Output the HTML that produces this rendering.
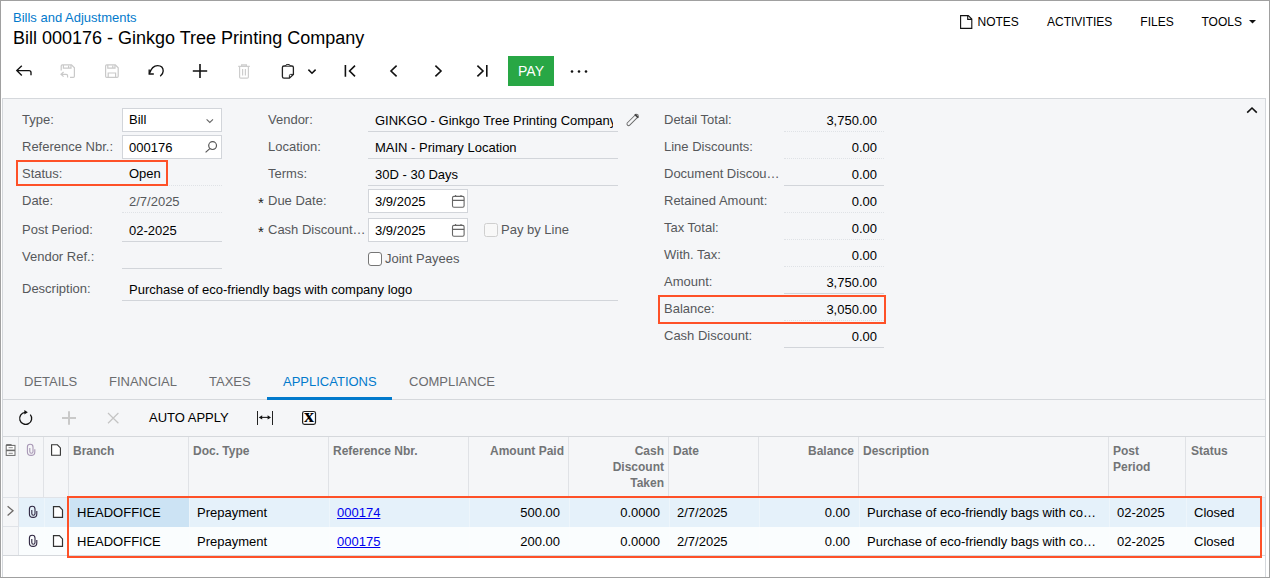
<!DOCTYPE html>
<html lang="en">
<head>
<meta charset="utf-8">
<title>Bill 000176 - Ginkgo Tree Printing Company</title>
<style>
*{box-sizing:border-box;margin:0;padding:0}
html,body{width:1270px;height:578px;overflow:hidden;background:#fff}
body{font-family:"Liberation Sans",Arial,sans-serif;font-size:13px;color:#000;position:relative}
.a{position:absolute;white-space:nowrap}
#frame{position:absolute;left:0;top:0;width:1270px;height:578px;border:1px solid #a0a0a0;pointer-events:none;z-index:50}
.lbl{color:#56585b}
.val{color:#000}
.dis{color:#56585b}
.ul{position:absolute;height:1px;background:#d2d5da}
.uld{position:absolute;height:0;border-top:1px dotted #dfe2e6}
.box{position:absolute;background:#fff;border:1px solid #d2d5da}
.hl{position:absolute;border:2px solid #fe5128;z-index:20}
.tab{position:absolute;top:374px;font-size:13px;color:#6b6c6f;white-space:nowrap;line-height:16px}
.r{text-align:right}
svg{position:absolute;overflow:visible}
.hd{position:absolute;font-weight:bold;color:#727476;font-size:12px;line-height:16px;top:443px;white-space:nowrap}
.vl{position:absolute;width:1px;background:#e0e2e6}
.c{position:absolute;white-space:nowrap;line-height:16px}
</style>
</head>
<body>
<div id="frame"></div>

<!-- header -->
<div class="a" style="left:13px;top:10px;color:#027acc;line-height:15px">Bills and Adjustments</div>
<div class="a" style="left:13px;top:27px;font-size:18px;line-height:22px">Bill 000176 - Ginkgo Tree Printing Company</div>

<div class="a" style="left:977.5px;top:15px;font-size:12px;line-height:15px">NOTES</div>
<div class="a" style="left:1047px;top:15px;font-size:12px;line-height:15px">ACTIVITIES</div>
<div class="a" style="left:1140.3px;top:15px;font-size:12px;line-height:15px">FILES</div>
<div class="a" style="left:1201.5px;top:15px;font-size:12px;line-height:15px">TOOLS</div>

<!-- toolbar -->
<div class="a" style="left:508px;top:56px;width:46px;height:30px;background:#28a745;color:#fff;font-size:14px;line-height:30px;text-align:center">PAY</div>


<!-- toolbar icons (page coordinates) -->
<svg id="ico" width="1270" height="578" viewBox="0 0 1270 578" style="left:0;top:0;z-index:10" fill="none" stroke="#111" stroke-width="1.35" stroke-linecap="butt" stroke-linejoin="miter">
<!-- back -->
<path d="M21.8 65.8 L16.8 70.6 L21.8 75.4 M16.8 70.6 H29 Q31 70.6 31 72.6 V75.2"/>
<!-- save & close (disabled) -->
<g stroke="#c9c9c9" stroke-width="1.2">
<path d="M61.2 70.5 V66 Q61.2 64.9 62.3 64.9 H71.5 L74.4 67.8 V76.2 Q74.4 77.3 73.3 77.3 H70"/>
<path d="M63.4 64.9 V68.2 H71 V64.9 M68.6 65.6 V67.4"/>
<path d="M63.6 72 L61 74.3 L63.6 76.6 M61 74.3 H66.2 Q67.6 74.3 67.6 75.7 V77.6"/>
</g>
<!-- save (disabled) -->
<g stroke="#c9c9c9" stroke-width="1.2">
<path d="M105.6 66 Q105.6 64.9 106.7 64.9 H115.3 L118.2 67.8 V76.2 Q118.2 77.3 117.1 77.3 H106.7 Q105.6 77.3 105.6 76.2 Z"/>
<path d="M107.8 64.9 V68.2 H115 V64.9 M112.8 65.6 V67.4 M108.2 77.3 V73 H115.6 V77.3"/>
</g>
<!-- undo -->
<path d="M149.4 73.6 Q152 65.6 157.6 65.6 Q163.2 65.6 163.2 71 Q163.2 74 160.2 76.2"/>
<path d="M149.2 69.4 V74 H153.8"/>
<!-- plus -->
<path d="M200 64 V78 M192.8 71 H207.2" stroke-width="1.6"/>
<!-- trash (disabled) -->
<g stroke="#cdcdcd" stroke-width="1.2">
<path d="M238.2 66.4 H249.8 M241.6 66.4 V64.8 H246.4 V66.4 M239.6 66.4 V77 Q239.6 78.2 240.8 78.2 H247.2 Q248.4 78.2 248.4 77 V66.4 M242.6 69 V75.6 M245.4 69 V75.6"/>
</g>
<!-- clipboard -->
<g stroke="#222" stroke-width="1.3">
<path d="M285.6 66 H284 Q282.4 66 282.4 67.6 V76.6 Q282.4 78.2 284 78.2 H289.4 L293.4 74.4 V67.6 Q293.4 66 291.8 66 H290.2"/>
<path d="M285.4 66.2 Q285.4 64.4 287.9 64.4 Q290.4 64.4 290.4 66.2 Z" stroke-width="1"/>
<path d="M289.4 78 V75.6 Q289.4 74.4 290.6 74.4 H293.2" stroke-width="1"/>
</g>
<!-- chevron -->
<path d="M308.4 69.6 L312 73.2 L315.6 69.6" stroke-width="1.5"/>
<!-- first -->
<path d="M345.4 65 V76.8 M355 65.6 L349.6 71 L355 76.4" stroke-width="1.6"/>
<!-- prev -->
<path d="M396.6 65.6 L391 71 L396.6 76.4" stroke-width="1.6"/>
<!-- next -->
<path d="M435.4 65.6 L441 71 L435.4 76.4" stroke-width="1.6"/>
<!-- last -->
<path d="M477.4 65.6 L483 71 L477.4 76.4 M486.8 65 V76.8" stroke-width="1.6"/>
<!-- dots -->
<g fill="#111" stroke="none"><circle cx="572" cy="71.5" r="1.3"/><circle cx="579" cy="71.5" r="1.3"/><circle cx="586" cy="71.5" r="1.3"/></g>
<!-- notes icon -->
<path d="M960.6 15.6 H968.3 L971.8 19.1 V28.4 H960.6 Z M967.7 16 V19.4 H971.4" stroke="#111" stroke-width="1.1"/>
<!-- tools caret -->
<path d="M1249 20 H1256 L1252.5 23.6 Z" fill="#111" stroke="none"/>

<!-- type chevron -->
<path d="M206.6 119.4 L209.8 122.4 L213 119.4" stroke="#666" stroke-width="1.1"/>
<!-- search -->
<g stroke="#555" stroke-width="1.2"><circle cx="212.6" cy="145.6" r="3.9"/><path d="M209.8 148.6 L205.6 152.4"/></g>
<!-- pencil -->
<path d="M628.6 123.9 L636.6 115.9" stroke="#666" stroke-width="4.2" stroke-linecap="round"/>
<path d="M628.6 123.9 L636.6 115.9" stroke="#f5f6f8" stroke-width="2.4" stroke-linecap="round"/>
<path d="M635.4 114.8 L637.8 117.2" stroke="#444" stroke-width="1.8" stroke-linecap="round"/>
<!-- calendars -->
<g stroke="#666" stroke-width="1.1">
<rect x="452.5" y="196.4" width="11.6" height="10.8" rx="1.4"/><path d="M452.5 200.4 H464.1 M455.6 195 V196.6 M461 195 V196.6"/>
<rect x="452.5" y="225.4" width="11.6" height="10.8" rx="1.4"/><path d="M452.5 229.4 H464.1 M455.6 224 V225.6 M461 224 V225.6"/>
</g>
<!-- checkboxes -->
<rect x="484.5" y="223.5" width="13" height="13" rx="2" fill="#f8f8f8" stroke="#cfcfcf" stroke-width="1"/>
<rect x="368.5" y="252.5" width="13" height="13" rx="2.5" fill="#fff" stroke="#767676" stroke-width="1"/>
<!-- grid toolbar: refresh -->
<path d="M30.3 414.6 A6 6 0 1 1 25 412.45" stroke="#111" stroke-width="1.3"/>
<path d="M24.4 410 L27.8 412.3 L24.4 414.6 Z" fill="#111" stroke="none"/>
<!-- plus / x disabled -->
<path d="M69 411.2 V424.8 M62 418 H76" stroke="#c9c9c9" stroke-width="2"/>
<path d="M108 413 L118.4 423.2 M118.4 413 L108 423.2" stroke="#c4c4c4" stroke-width="1.2"/>
<!-- fit columns -->
<g stroke="#222" stroke-width="1"><path d="M257.5 411 V425 M272.5 411 V425"/><path d="M261 417.4 H269" stroke-width="1.1"/></g>
<path d="M258.8 417.4 L262.2 415.2 V419.6 Z M271 417.4 L267.6 415.2 V419.6 Z" fill="#111" stroke="none"/>
<!-- excel box -->
<rect x="302.6" y="411.5" width="12.9" height="12.8" rx="1.8" fill="#fff" stroke="#222" stroke-width="1.2"/>
<!-- grid header icons -->
<g stroke="#6a6a6a" stroke-width="1">
<rect x="6.2" y="445.4" width="8.8" height="10" fill="#fff"/>
<path d="M6.2 444.8 H11.6" stroke-width="1.4"/>
<path d="M6.2 450.4 H15" stroke-width="1.6"/>
<path d="M8.6 447.7 H12.8 M8.6 453.3 H12.8" stroke="#8a8a8a"/>
</g>
<path d="M34.8 449.2 V452 Q34.8 455.4 31.1 455.4 Q27.4 455.4 27.4 452 V447 Q27.4 444.3 30.2 444.3 Q33 444.3 33 447 V451.4 Q33 453.2 31.4 453.2 Q29.8 453.2 29.8 451.4 V448" stroke="#a897b5" stroke-width="1.1"/>
<path d="M51.6 444.8 H57.4 L60.4 447.9 V455.2 H51.6 Z" fill="#fff" stroke="#333" stroke-width="1.1"/>
<!-- row icons -->
<path d="M7.6 506.2 L13 510.8 L7.6 515.4" stroke="#6d6a68" stroke-width="1.3"/>
<g id="rowico">
<path d="M36.8 511 V514 Q36.8 517.4 33.1 517.4 Q29.4 517.4 29.4 514 V509 Q29.4 506.2 32.2 506.2 Q35 506.2 35 509 V513.4 Q35 515.2 33.4 515.2 Q31.8 515.2 31.8 513.4 V510" stroke="#2e2540" stroke-width="1.1"/>
<path d="M53.5 506.7 H59.4 L62.5 509.9 V517.3 H53.5 Z" fill="#fff" stroke="#333" stroke-width="1.2"/>
</g>
<use href="#rowico" y="29"/>
<!-- collapse caret -->
<path d="M1247.2 112.6 L1252 108 L1256.8 112.6" stroke-width="1.6"/>
</svg>

<!-- form panel -->
<div class="a" id="panel" style="left:2px;top:98px;width:1264px;height:339px;background:#f5f6f8;border:1px solid #d5d8dc;border-bottom:none"></div>

<!-- col 1 -->
<div class="a lbl" style="left:22px;top:112px">Type:</div>
<div class="a lbl" style="left:22px;top:139px">Reference Nbr.:</div>
<div class="a lbl" style="left:22px;top:166px">Status:</div>
<div class="a lbl" style="left:22px;top:193px">Date:</div>
<div class="a lbl" style="left:22px;top:222px">Post Period:</div>
<div class="a lbl" style="left:22px;top:249px">Vendor Ref.:</div>
<div class="a lbl" style="left:22px;top:281px">Description:</div>

<div class="box" style="left:122px;top:108px;width:100px;height:24px"></div>
<div class="box" style="left:122px;top:135px;width:100px;height:24px"></div>
<div class="a val" style="left:129px;top:112px">Bill</div>
<div class="a val" style="left:129px;top:140px">000176</div>
<div class="a val" style="left:129px;top:166px">Open</div>
<div class="a dis" style="left:129px;top:194px">2/7/2025</div>
<div class="a val" style="left:129px;top:223px">02-2025</div>
<div class="a val" style="left:129px;top:282px">Purchase of eco-friendly bags with company logo</div>
<div class="uld" style="left:122px;top:185px;width:100px"></div>
<div class="uld" style="left:122px;top:212px;width:100px"></div>
<div class="ul" style="left:122px;top:241px;width:100px"></div>
<div class="ul" style="left:122px;top:268px;width:100px"></div>
<div class="ul" style="left:122px;top:300px;width:496px"></div>

<!-- col 2 -->
<div class="a lbl" style="left:268px;top:112px">Vendor:</div>
<div class="a lbl" style="left:268px;top:139px">Location:</div>
<div class="a lbl" style="left:268px;top:166px">Terms:</div>
<div class="a lbl" style="left:268px;top:193px">Due Date:</div>
<div class="a lbl" style="left:268px;top:222px">Cash Discount…</div>
<div class="a val" style="left:375px;top:113px;width:238px;overflow:hidden">GINKGO - Ginkgo Tree Printing Company</div>
<div class="a val" style="left:375px;top:140px">MAIN - Primary Location</div>
<div class="a val" style="left:375px;top:167px">30D - 30 Days</div>
<div class="ul" style="left:368px;top:131px;width:250px"></div>
<div class="ul" style="left:368px;top:158px;width:250px"></div>
<div class="ul" style="left:368px;top:185px;width:250px"></div>
<div class="box" style="left:368px;top:189px;width:100px;height:24px"></div>
<div class="box" style="left:368px;top:218px;width:100px;height:24px"></div>
<div class="a val" style="left:375px;top:194px">3/9/2025</div>
<div class="a val" style="left:375px;top:223px">3/9/2025</div>
<div class="a lbl" style="left:501px;top:222px">Pay by Line</div>
<div class="a lbl" style="left:385px;top:251px">Joint Payees</div>

<!-- col 3 -->
<div class="a lbl" style="left:664px;top:112px">Detail Total:</div>
<div class="a lbl" style="left:664px;top:139px">Line Discounts:</div>
<div class="a lbl" style="left:664px;top:166px">Document Discou…</div>
<div class="a lbl" style="left:664px;top:193px">Retained Amount:</div>
<div class="a lbl" style="left:664px;top:220px">Tax Total:</div>
<div class="a lbl" style="left:664px;top:247px">With. Tax:</div>
<div class="a lbl" style="left:664px;top:274px">Amount:</div>
<div class="a lbl" style="left:664px;top:301px">Balance:</div>
<div class="a lbl" style="left:664px;top:328px">Cash Discount:</div>
<div class="a val r" style="left:784px;width:93px;top:113px">3,750.00</div>
<div class="a val r" style="left:784px;width:93px;top:140px">0.00</div>
<div class="a val r" style="left:784px;width:93px;top:167px">0.00</div>
<div class="a val r" style="left:784px;width:93px;top:194px">0.00</div>
<div class="a val r" style="left:784px;width:93px;top:221px">0.00</div>
<div class="a val r" style="left:784px;width:93px;top:248px">0.00</div>
<div class="a val r" style="left:784px;width:93px;top:275px">3,750.00</div>
<div class="a val r" style="left:784px;width:93px;top:302px">3,050.00</div>
<div class="a val r" style="left:784px;width:93px;top:329px">0.00</div>

<div class="uld" style="left:784px;top:131px;width:100px"></div>
<div class="uld" style="left:784px;top:158px;width:100px"></div>
<div class="ul" style="left:784px;top:185px;width:100px"></div>
<div class="uld" style="left:784px;top:212px;width:100px"></div>
<div class="uld" style="left:784px;top:239px;width:100px"></div>
<div class="uld" style="left:784px;top:266px;width:100px"></div>
<div class="ul" style="left:784px;top:293px;width:100px"></div>
<div class="uld" style="left:784px;top:320px;width:100px"></div>
<div class="ul" style="left:784px;top:347px;width:100px"></div>


<div class="a" style="left:258px;top:195px;font-size:15px;line-height:15px;color:#222">*</div>
<div class="a" style="left:258px;top:224px;font-size:15px;line-height:15px;color:#222">*</div>
<div class="a" style="left:302px;top:407px;width:14px;text-align:center;font-family:'Liberation Serif',serif;font-weight:bold;font-size:18px;line-height:18px;color:#000;z-index:12;transform:scaleX(1.12)">x</div>

<!-- highlights -->
<div class="hl" style="left:16px;top:160px;width:152px;height:26px"></div>
<div class="hl" style="left:658px;top:295px;width:228px;height:29px"></div>
<div class="hl" style="left:67px;top:496px;width:1195px;height:62px"></div>

<!-- tabs -->
<div class="tab" style="left:24px">DETAILS</div>
<div class="tab" style="left:109px">FINANCIAL</div>
<div class="tab" style="left:209px">TAXES</div>
<div class="tab" style="left:283px;color:#027acc">APPLICATIONS</div>
<div class="tab" style="left:409px">COMPLIANCE</div>
<div class="a" style="left:3px;top:399px;width:1262px;height:1px;background:#d5d8dc"></div>
<div class="a" style="left:267px;top:397px;width:125px;height:3px;background:#027acc"></div>

<!-- grid toolbar -->
<div class="a" style="left:149px;top:410px;line-height:16px">AUTO APPLY</div>

<!-- grid -->
<div class="a" style="left:2px;top:436px;width:1264px;height:141px;background:#fff;border-left:1px solid #d5d8dc;border-right:1px solid #d5d8dc;border-top:1px solid #d5d8dc"></div>
<div class="a" style="left:3px;top:437px;width:1262px;height:61px;background:#f5f6f8;border-bottom:1px solid #e0e3e8"></div>
<div class="a" style="left:19px;top:498px;width:1246px;height:29px;background:#e5f1fa"></div>
<div class="a" style="left:69px;top:498px;width:120px;height:29px;background:#cce3f4"></div>
<div class="a" style="left:19px;top:527px;width:1246px;height:28px;background:#fafdfe"></div>
<div class="a" style="left:3px;top:498px;width:15px;height:57px;background:#f5f6f8"></div>
<div class="a" style="left:3px;top:526px;width:15px;height:1px;background:#e0e3e8"></div>
<div class="a" style="left:3px;top:555px;width:1262px;height:1px;background:#d5d8dc"></div>
<div class="vl" style="left:18px;top:437px;height:60px"></div>
<div class="vl" style="left:18px;top:498px;height:57px;background:#e0e3e8"></div>
<div class="vl" style="left:43px;top:437px;height:60px"></div>
<div class="vl" style="left:44px;top:498px;height:57px;background:rgba(255,255,255,.3)"></div>
<div class="vl" style="left:68px;top:437px;height:60px"></div>
<div class="vl" style="left:69px;top:498px;height:57px;background:rgba(255,255,255,.3)"></div>
<div class="vl" style="left:188px;top:437px;height:60px"></div>
<div class="vl" style="left:189px;top:498px;height:57px;background:rgba(255,255,255,.3)"></div>
<div class="vl" style="left:328px;top:437px;height:60px"></div>
<div class="vl" style="left:329px;top:498px;height:57px;background:rgba(255,255,255,.3)"></div>
<div class="vl" style="left:468px;top:437px;height:60px"></div>
<div class="vl" style="left:469px;top:498px;height:57px;background:rgba(255,255,255,.3)"></div>
<div class="vl" style="left:568px;top:437px;height:60px"></div>
<div class="vl" style="left:569px;top:498px;height:57px;background:rgba(255,255,255,.3)"></div>
<div class="vl" style="left:668px;top:437px;height:60px"></div>
<div class="vl" style="left:669px;top:498px;height:57px;background:rgba(255,255,255,.3)"></div>
<div class="vl" style="left:758px;top:437px;height:60px"></div>
<div class="vl" style="left:759px;top:498px;height:57px;background:rgba(255,255,255,.3)"></div>
<div class="vl" style="left:858px;top:437px;height:60px"></div>
<div class="vl" style="left:859px;top:498px;height:57px;background:rgba(255,255,255,.3)"></div>
<div class="vl" style="left:1108px;top:437px;height:60px"></div>
<div class="vl" style="left:1109px;top:498px;height:57px;background:rgba(255,255,255,.3)"></div>
<div class="vl" style="left:1185px;top:437px;height:60px"></div>
<div class="vl" style="left:1186px;top:498px;height:57px;background:rgba(255,255,255,.3)"></div>
<div class="hd" style="left:73px">Branch</div>
<div class="hd" style="left:193px">Doc. Type</div>
<div class="hd" style="left:333px">Reference Nbr.</div>
<div class="hd r" style="left:464px;width:100px">Amount Paid</div>
<div class="hd r" style="left:564px;width:100px">Cash<br>Discount<br>Taken</div>
<div class="hd" style="left:673px">Date</div>
<div class="hd r" style="left:754px;width:100px">Balance</div>
<div class="hd" style="left:863px">Description</div>
<div class="hd" style="left:1113px">Post<br>Period</div>
<div class="hd" style="left:1191px">Status</div>
<div class="c" style="left:77px;top:505px">HEADOFFICE</div>
<div class="c" style="left:197px;top:505px">Prepayment</div>
<div class="c" style="left:337px;top:505px;color:#0000ee;text-decoration:underline">000174</div>
<div class="c r" style="left:460px;width:100px;top:505px">500.00</div>
<div class="c r" style="left:560px;width:100px;top:505px">0.0000</div>
<div class="c" style="left:677px;top:505px">2/7/2025</div>
<div class="c r" style="left:750px;width:100px;top:505px">0.00</div>
<div class="c" style="left:867px;top:505px;width:233px;overflow:hidden;text-overflow:ellipsis">Purchase of eco-friendly bags with company logo</div>
<div class="c" style="left:1117px;top:505px">02-2025</div>
<div class="c" style="left:1194px;top:505px">Closed</div>
<div class="c" style="left:77px;top:534px">HEADOFFICE</div>
<div class="c" style="left:197px;top:534px">Prepayment</div>
<div class="c" style="left:337px;top:534px;color:#0000ee;text-decoration:underline">000175</div>
<div class="c r" style="left:460px;width:100px;top:534px">200.00</div>
<div class="c r" style="left:560px;width:100px;top:534px">0.0000</div>
<div class="c" style="left:677px;top:534px">2/7/2025</div>
<div class="c r" style="left:750px;width:100px;top:534px">0.00</div>
<div class="c" style="left:867px;top:534px;width:233px;overflow:hidden;text-overflow:ellipsis">Purchase of eco-friendly bags with company logo</div>
<div class="c" style="left:1117px;top:534px">02-2025</div>
<div class="c" style="left:1194px;top:534px">Closed</div>

</body>
</html>
